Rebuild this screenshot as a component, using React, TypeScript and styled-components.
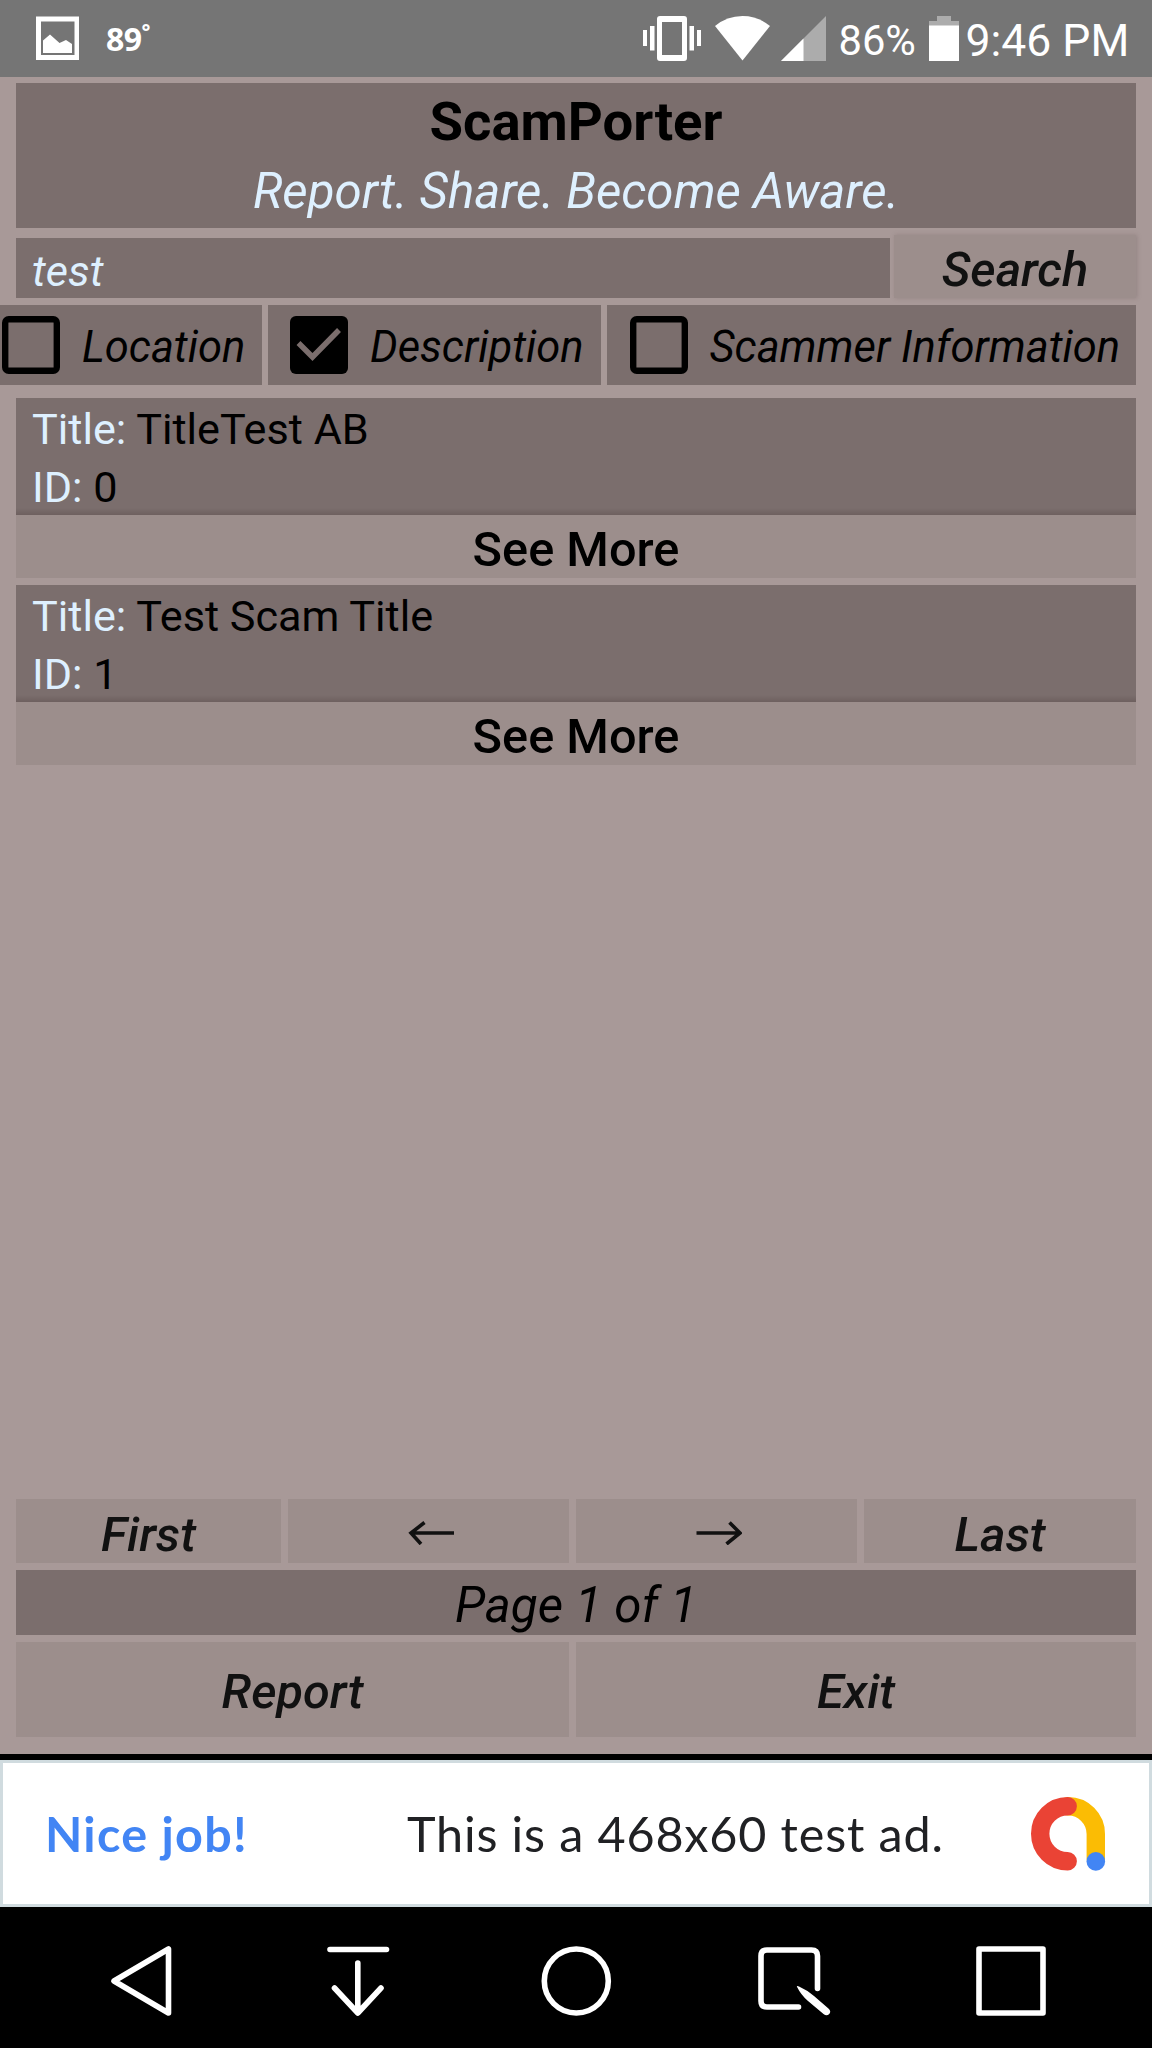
import React from "react";
import styled, { createGlobalStyle } from "styled-components";

const Global = createGlobalStyle`
  *, *::before, *::after { box-sizing: border-box; }
  body { margin: 0; background: #000; font-family: Roboto, "Noto Sans", sans-serif; }
  button, input { font-family: inherit; border: 0; margin: 0; border-radius: 0; }
`;

const C = {
  page: "#a89998",
  panel: "#7b6e6d",
  button: "#9c8e8c",
  pale: "#def0ff",
};

const Screen = styled.div`
  width: 1152px;
  height: 2048px;
  display: flex;
  flex-direction: column;
  overflow: hidden;
  background: #000;
`;

const StatusBar = styled.header`
  height: 77px;
  flex: none;
  display: flex;
  align-items: flex-start;
  background: #757575;
  color: #fff;
  padding: 16px 0 0 36px;
`;
const StatusSvg = styled.svg<{ $ml?: number }>`
  flex: none;
  display: block;
  margin-left: ${(p) => p.$ml ?? 0}px;
`;
const Temp = styled.span`
  font: 700 32px/44px "Noto Sans", sans-serif;
  margin-left: 27px;
  letter-spacing: -0.5px;
  flex: 1;
  display: flex;
  padding-top: 1px;
`;
const Degree = styled.sup`
  font: 700 21px/28px "Noto Sans", sans-serif;
`;
const StatusText = styled.span<{ $size: number; $ml: number; $w: number }>`
  font-size: ${(p) => p.$size}px;
  line-height: 50px;
  margin-left: ${(p) => p.$ml}px;
  width: ${(p) => p.$w}px;
  white-space: nowrap;
`;

const Main = styled.main`
  height: 1677px;
  flex: none;
  display: flex;
  flex-direction: column;
  background: ${C.page};
  padding: 6px 16px 17px;
`;
const Banner = styled.div`
  height: 145px;
  flex: none;
  background: ${C.panel};
  text-align: center;
  padding-top: 2px;
`;
const AppName = styled.h1`
  margin: 0 0 1px;
  font-size: 54.5px;
  line-height: 72px;
  font-weight: 700;
  color: #000;
`;
const Tagline = styled.p`
  margin: 0;
  font-size: 49.3px;
  line-height: 66px;
  font-style: italic;
  color: ${C.pale};
`;
const SearchRow = styled.div`
  display: flex;
  align-items: flex-end;
  gap: 4px;
  margin-top: 7px;
  height: 63px;
`;
const SearchInput = styled.input`
  width: 874px;
  height: 60px;
  background: ${C.panel};
  color: ${C.pale};
  font-size: 43.3px;
  font-style: italic;
  padding: 6px 16px 0;
`;
const Button = styled.button<{ $w?: number; $h: number; $pt?: number; $upright?: boolean; $raised?: boolean }>`
  ${(p) => (p.$w ? `width: ${p.$w}px; flex: none;` : "flex: 1;")}
  height: ${(p) => p.$h}px;
  display: flex;
  align-items: center;
  justify-content: center;
  background: ${C.button};
  color: ${(p) => (p.$upright ? "#000" : "#111")};
  font-size: 48.7px;
  font-weight: 500;
  font-style: ${(p) => (p.$upright ? "normal" : "italic")};
  line-height: 56px;
  padding: ${(p) => p.$pt ?? 0}px 0 0;
  box-shadow: ${(p) => (p.$raised ? "1px 0 4px rgba(110, 92, 92, 0.35)" : "none")};
`;
const Filters = styled.div`
  display: flex;
  gap: 6px;
  height: 80px;
  margin: 7px 0 13px -16px;
`;
const Filter = styled.label<{ $w: number; $pl: number }>`
  width: ${(p) => p.$w}px;
  padding: 0 0 1px ${(p) => p.$pl}px;
  flex: none;
  display: flex;
  align-items: center;
  background: ${C.panel};
  color: #000;
  font-size: 43.5px;
  font-style: italic;
  white-space: nowrap;
`;
const FilterText = styled.span`
  padding-top: 5px;
  margin-left: 22px;
`;
const Card = styled.article`
  flex: none;
  margin-bottom: 7px;
`;
const CardBody = styled.div`
  height: 117px;
  background: linear-gradient(${C.panel} 110px, #6e605f 117px);
  padding: 3px 0 0 16px;
`;
const Line = styled.div`
  font-size: 43.2px;
  line-height: 58px;
  color: #000;
`;
const Key = styled.span`
  color: ${C.pale};
`;
const CardAction = styled.div`
  display: flex;
`;
const Spacer = styled.div`
  flex: 1;
`;
const ButtonRow = styled.div`
  display: flex;
  gap: 7px;
  flex: none;
`;
const PageInfo = styled.div`
  height: 65px;
  margin: 7px 0;
  background: ${C.panel};
  color: #000;
  font-size: 49.3px;
  font-style: italic;
  line-height: 59px;
  padding-top: 6px;
  text-align: center;
  flex: none;
`;

const Ad = styled.aside`
  height: 147px;
  margin-top: 6px;
  flex: none;
  background: #fff;
  border: 3px solid #d0dbdf;
  display: flex;
  align-items: center;
  font-family: Lato, sans-serif;
`;
const AdLead = styled.span`
  width: 404px;
  flex: none;
  padding: 0 0 2px 42px;
  font-size: 48.5px;
  font-weight: 700;
  letter-spacing: 1.3px;
  color: #4285f4;
`;
const AdText = styled.span`
  width: 624px;
  flex: none;
  padding-bottom: 2px;
  font-size: 48.5px;
  letter-spacing: 0.85px;
  white-space: nowrap;
  color: #202124;
`;
const AdLogo = styled.svg`
  flex: none;
  display: block;
`;

const NavBar = styled.nav`
  flex: 1;
  display: grid;
  grid-template-columns: repeat(5, 1fr);
  justify-items: center;
  align-items: center;
  padding: 6px 32px 0;
`;
const NavSvg = styled.svg`
  display: block;
  width: 80px;
  height: 80px;
  fill: none;
  stroke: #fff;
  stroke-width: 5.6;
  stroke-linecap: round;
  stroke-linejoin: round;
`;

function Box({ checked }: { checked?: boolean }) {
  return (
    <svg width="58" height="58" viewBox="0 0 58 58" fill="none">
      {checked ? (
        <>
          <rect width="58" height="58" rx="6" fill="#000" />
          <path d="M8.5 27 L22.5 41 L49 14" stroke={C.panel} strokeWidth="5.5" />
        </>
      ) : (
        <rect x="3.2" y="3.2" width="51.6" height="51.6" rx="3.5" stroke="#000" strokeWidth="6.4" />
      )}
    </svg>
  );
}

function Arrow({ right }: { right?: boolean }) {
  return (
    <svg width="50" height="24" viewBox="-4.500 0 50 24" fill="none" stroke="#111" strokeWidth="3.6">
      {right ? <path d="M0 12 H44 M33 1.500 L43.500 12 L30 23" /> : <path d="M46 12 H2 M16 1.500 L2.500 12 L12.500 23" />}
    </svg>
  );
}

function Result({ title, id }: { title: string; id: number }) {
  return (
    <Card>
      <CardBody>
        <Line><Key>Title:</Key> {title}</Line>
        <Line><Key>ID:</Key> {id}</Line>
      </CardBody>
      <CardAction>
        <Button $h={63} $pt={6} $upright>See More</Button>
      </CardAction>
    </Card>
  );
}

export default function App() {
  return (
    <Screen>
      <Global />
      <StatusBar>
        <StatusSvg width="43" height="45" viewBox="0 0 43 45">
          <path fillRule="evenodd" fill="#fff" d="M0 .5H43.500V44H0ZM5 5.500V39H38.500V5.500Z" />
          <path fill="#fff" d="M7 24.500 L14 18.500 L23.500 27 L30 24 L36 28 V37 H7Z" />
        </StatusSvg>
        <Temp>89<Degree>°</Degree></Temp>
        <StatusSvg width="58" height="45" viewBox="0 0 58 45" fill="#fff">
          <path fillRule="evenodd" d="M17 0H41Q44 0 44 3V42Q44 45 41 45H17Q14 45 14 42V3Q14 0 17 0ZM19 6V39H39V6Z" />
          <path d="M0 14H4V30H0ZM7 10H11.500V34.500H7ZM46.500 10H51V34.500H46.500ZM54 14H58V30H54Z" />
        </StatusSvg>
        <StatusSvg $ml={14} width="55" height="45" viewBox="0 0 55 45">
          <path fill="#fff" d="M0 10 Q12 0 27.500 0 Q43 0 55 10 L27.500 44.500Z" />
        </StatusSvg>
        <StatusSvg $ml={11} width="45" height="45" viewBox="0 0 45 45">
          <path fill="#acacac" d="M45 0V45H0Z" />
          <path fill="#fff" d="M22.500 22.500V45H0Z" />
        </StatusSvg>
        <StatusText $size={41.700} $ml={12.500} $w={90.500}>86%</StatusText>
        <StatusSvg width="30" height="45" viewBox="0 0 30 45">
          <path fill="#acacac" d="M8 0H22V5H30V10H0V5H8Z" />
          <path fill="#fff" d="M0 9.500H30V45H0Z" />
        </StatusSvg>
        <StatusText $size={44.500} $ml={6.500} $w={186.500}>9:46 PM</StatusText>
      </StatusBar>
      <Main>
        <Banner>
          <AppName>ScamPorter</AppName>
          <Tagline>Report. Share. Become Aware.</Tagline>
        </Banner>
        <SearchRow>
          <SearchInput defaultValue="test" />
          <Button $h={63} $pt={6} $raised>Search</Button>
        </SearchRow>
        <Filters>
          <Filter $w={262} $pl={2}><Box /><FilterText>Location</FilterText></Filter>
          <Filter $w={333} $pl={22}><Box checked /><FilterText>Description</FilterText></Filter>
          <Filter $w={529} $pl={22.500}><Box /><FilterText>Scammer Information</FilterText></Filter>
        </Filters>
        <Result title="TitleTest AB" id={0} />
        <Result title="Test Scam Title" id={1} />
        <Spacer />
        <ButtonRow>
          <Button $w={265} $h={64} $pt={7}>First</Button>
          <Button $w={281} $h={64} $pt={3}><Arrow /></Button>
          <Button $w={281} $h={64} $pt={3}><Arrow right /></Button>
          <Button $h={64} $pt={7}>Last</Button>
        </ButtonRow>
        <PageInfo>Page 1 of 1</PageInfo>
        <ButtonRow>
          <Button $w={553} $h={95} $pt={5}>Report</Button>
          <Button $h={95} $pt={5}>Exit</Button>
        </ButtonRow>
      </Main>
      <Ad>
        <AdLead>Nice job!</AdLead>
        <AdText>This is a 468x60 test ad.</AdText>
        <AdLogo width="75" height="74" viewBox="0 0 75 74" fill="none" strokeLinecap="round">
          <path d="M37 9.300 A27.700 27.700 0 0 1 64.800 37 V62" stroke="#fbbc04" strokeWidth="18.400" />
          <path d="M36.700 9.300 A27.500 27.500 0 0 0 36.700 64.300" stroke="#ea4335" strokeWidth="18.400" />
          <circle cx="64.800" cy="64.400" r="9.300" fill="#4285f4" />
        </AdLogo>
      </Ad>
      <NavBar>
        <NavSvg viewBox="0 0 80 80"><path d="M67.500 8 V72 L13 40Z" /></NavSvg>
        <NavSvg viewBox="0 0 80 80"><path d="M12 8.500 H68.500 M39.800 22 V71.500 M16.500 47 L39.800 72 L63 47" /></NavSvg>
        <NavSvg viewBox="0 0 80 80"><circle cx="40.300" cy="40" r="32" /></NavSvg>
        <NavSvg viewBox="0 0 80 80">
          <path d="M63.500 47.500 V15 Q63.500 9 57.500 9 H13 Q7 9 7 15 V60 Q7 66 13 66 H44.500" />
          <path fill="#fff" stroke="none" d="M42.800 45.500 Q43 44.500 45 45.500 Q53 49 60 55 L75 68 Q77.500 71 75 73.300 Q72.500 75.500 69.500 73 L54 60 Q47 54 42.800 45.500Z" />
        </NavSvg>
        <NavSvg viewBox="0 0 80 80"><rect x="8" y="8" width="64" height="64" /></NavSvg>
      </NavBar>
    </Screen>
  );
}
